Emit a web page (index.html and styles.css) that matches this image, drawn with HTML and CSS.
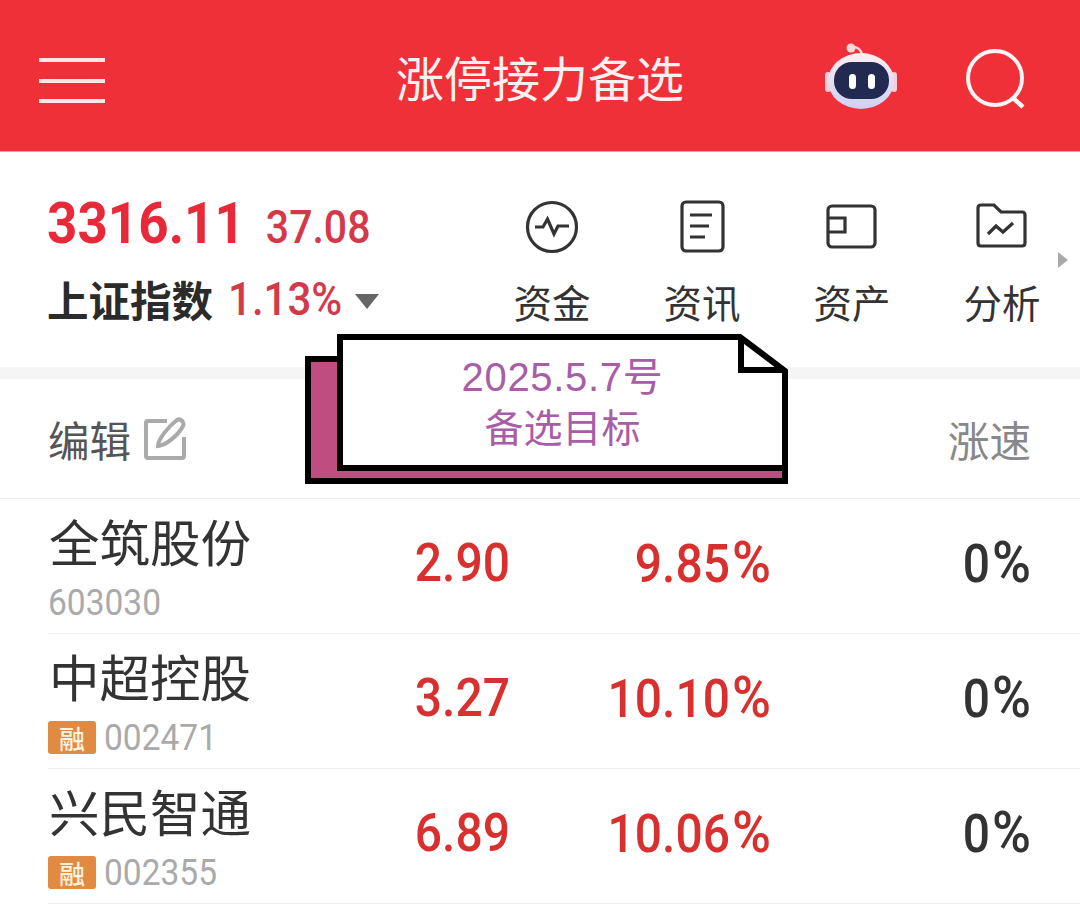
FILE: index.html
```html
<!DOCTYPE html>
<html lang="zh-CN">
<head>
  <meta charset="UTF-8">
  <title>涨停接力备选</title>
  <link rel="stylesheet" href="styles.css">
</head>
<body>

  <header class="topbar">
    <svg class="menu-icon" width="66" height="46" viewBox="0 0 66 46">
      <path d="M0 2H66M0 23H66M0 43H66" stroke="#fff" stroke-opacity=".88" stroke-width="4" fill="none"/>
    </svg>
    <h1 class="title">涨停接力备选</h1>
    <svg class="robot-icon" width="72" height="68" viewBox="0 0 72 68">
      <defs>
        <linearGradient id="shell" x1="0" y1="0" x2="0" y2="1">
          <stop offset="0" stop-color="#fdeef2"/>
          <stop offset="1" stop-color="#cfd0f4"/>
        </linearGradient>
      </defs>
      <path d="M27 4C33 4 36 6 37 12" stroke="#f8d5da" stroke-width="2.5" fill="none"/>
      <circle cx="26" cy="5" r="4.500" fill="#f9d8dc"/>
      <rect x="0" y="29" width="6" height="20" rx="3" fill="#f6cfd6"/>
      <rect x="66" y="29" width="6" height="20" rx="3" fill="#f6cfd6"/>
      <ellipse cx="36" cy="38" rx="33" ry="28" fill="url(#shell)"/>
      <rect x="9" y="19" width="55" height="37" rx="18" fill="#232a52"/>
      <rect x="24" y="31" width="7" height="15" rx="3.500" fill="#fff"/>
      <rect x="43" y="31" width="7" height="15" rx="3.500" fill="#fff"/>
    </svg>
    <svg class="search-icon" width="62" height="60" viewBox="0 0 62 60">
      <circle cx="30" cy="29" r="27" stroke="#fff" stroke-opacity=".95" stroke-width="4" fill="none"/>
      <path d="M48 49L58 58" stroke="#fff" stroke-opacity=".95" stroke-width="4.500" fill="none"/>
    </svg>
  </header>

  <section class="summary">
    <div class="index-box">
      <div class="index-top">
        <span class="index-value">3316.11</span>
        <span class="index-change">37.08</span>
      </div>
      <div class="index-bottom">
        <span class="index-name">上证指数</span>
        <span class="index-pct">1.13%</span>
        <span class="caret"></span>
      </div>
    </div>
    <nav class="shortcuts">
      <div class="shortcut">
        <svg width="54" height="54" viewBox="0 0 54 54" class="line-icon">
          <circle cx="27" cy="27" r="24.500"/>
          <path d="M10 27H18L22.500 19L29 34L33 26H44"/>
        </svg>
        <span>资金</span>
      </div>
      <div class="shortcut">
        <svg width="54" height="54" viewBox="0 0 54 54" class="line-icon">
          <rect x="7" y="2" width="41" height="49" rx="4"/>
          <path d="M15 15H37M15 26H34M15 37H30"/>
        </svg>
        <span>资讯</span>
      </div>
      <div class="shortcut">
        <svg width="54" height="54" viewBox="0 0 54 54" class="line-icon">
          <rect x="3" y="6" width="47" height="41" rx="4"/>
          <path d="M3 18H20V32H3"/>
        </svg>
        <span>资产</span>
      </div>
      <div class="shortcut">
        <svg width="54" height="54" viewBox="0 0 54 54" class="line-icon">
          <path d="M3 8Q3 5 6 5H19L26 12H47Q50 12 50 15V43Q50 46 47 46H6Q3 46 3 43Z"/>
          <path d="M13 34L21 26L28 32L38 23"/>
        </svg>
        <span>分析</span>
      </div>
      <span class="more-arrow"></span>
    </nav>
  </section>

  <div class="band"></div>

  <div class="list-head">
    <div class="edit">
      <span>编辑</span>
      <svg width="44" height="44" viewBox="0 0 44 44" class="edit-icon">
        <path d="M24 4H5Q3 4 3 6V39Q3 41 5 41H39Q41 41 41 39V20"/>
        <path d="M15 29C15 22 26 9 34 3C37 1 42 5 40 9C36 17 24 28 15 29Z"/>
      </svg>
    </div>
    <span class="speed-head">涨速</span>
  </div>

  <div class="stock-row">
    <div class="stock-info">
      <div class="stock-name">全筑股份</div>
      <div class="stock-code"><span>603030</span></div>
    </div>
    <div class="num">2.90</div>
    <div class="num">9.85<i>%</i></div>
    <div class="num speed">0<i>%</i></div>
  </div>
  <div class="stock-row">
    <div class="stock-info">
      <div class="stock-name">中超控股</div>
      <div class="stock-code"><em class="badge">融</em><span>002471</span></div>
    </div>
    <div class="num">3.27</div>
    <div class="num">10.10<i>%</i></div>
    <div class="num speed">0<i>%</i></div>
  </div>
  <div class="stock-row">
    <div class="stock-info">
      <div class="stock-name">兴民智通</div>
      <div class="stock-code"><em class="badge">融</em><span>002355</span></div>
    </div>
    <div class="num">6.89</div>
    <div class="num">10.06<i>%</i></div>
    <div class="num speed">0<i>%</i></div>
  </div>

  <!-- sticker pasted over the page -->
  <div class="note">
    <svg class="note-shape" width="484" height="150" viewBox="0 0 484 150">
      <path d="M36 25H4V147H481V130H36Z" fill="#c04d80" stroke="#000" stroke-width="6"/>
      <path d="M36 3H436L481 37V134H36Z" fill="#fff" stroke="#000" stroke-width="6"/>
      <path d="M437 3V36H481" fill="none" stroke="#000" stroke-width="6"/>
    </svg>
    <div class="note-text">
      <div class="note-date">2025.5.7号</div>
      <div>备选目标</div>
    </div>
  </div>

</body>
</html>
```

FILE: styles.css
```css
* {
  box-sizing: border-box;
}

body {
  margin: 0;
  height: 922px;
  overflow: hidden;
  position: relative;
  background-color: #fff;
  font-family: Roboto, "Noto Sans CJK SC", sans-serif;
  color: #333;
}

.topbar {
  height: 152px;
  background-color: #f03038;
  border-bottom: 1px solid #f6a0a4;
  display: flex;
  align-items: center;
  padding: 0 53px 0 39px;
  position: relative;
}

.menu-icon {
  margin-top: 11px;
}

.title {
  position: absolute;
  left: 0;
  right: 0;
  top: 46px;
  margin: 0;
  text-align: center;
  font-family: "Noto Sans CJK SC", sans-serif;
  font-size: 48px;
  line-height: 60px;
  font-weight: 400;
  color: #fdf0f0;
}

.robot-icon {
  margin-left: auto;
  margin-top: 2px;
}

.search-icon {
  margin-left: 68px;
  margin-top: 6px;
}

.summary {
  height: 215px;
  display: flex;
  padding-left: 47px;
}

.index-box {
  flex: none;
  width: 430px;
}

.index-top {
  display: flex;
  align-items: baseline;
  gap: 21px;
  height: 96px;
  padding-top: 36px;
}

.index-value {
  font-size: 53px;
  line-height: 70px;
  font-weight: 700;
  color: #e8293a;
  transform: scaleY(1.1);
}

.index-change {
  font-size: 41px;
  line-height: 60px;
  font-weight: 500;
  color: #d4394a;
  transform: scaleY(1.13);
}

.index-bottom {
  display: flex;
  align-items: center;
  height: 60px;
  margin-top: 21px;
}

.index-name {
  font-family: "Noto Sans CJK SC", sans-serif;
  font-size: 41.500px;
  font-weight: 700;
  color: #2b2b2b;
}

.index-pct {
  margin-left: 15px;
  font-size: 42px;
  font-weight: 500;
  color: #d4394a;
  transform: scaleY(1.08);
}

.caret {
  margin-left: 13px;
  margin-top: 4px;
  border-style: solid;
  border-width: 15px 12px 0;
  border-color: #666 transparent transparent;
}

.shortcuts {
  flex: none;
  display: flex;
  padding-top: 48px;
  position: relative;
}

.shortcut {
  width: 150px;
  display: flex;
  flex-direction: column;
  align-items: center;
  font-family: "Noto Sans CJK SC", sans-serif;
  font-size: 38.500px;
  line-height: 50px;
  color: #333;
}

.shortcut span {
  margin-top: 22px;
}

.line-icon {
  fill: none;
  stroke: #333;
  stroke-width: 3.2;
}

.more-arrow {
  position: absolute;
  left: 581px;
  top: 100px;
  border-style: solid;
  border-width: 8px 0 8px 10px;
  border-color: transparent transparent transparent #aaa;
}

.band {
  height: 12px;
  background-color: #f5f5f5;
}

.list-head {
  height: 120px;
  padding: 0 49px 0 48px;
  display: flex;
  align-items: center;
  justify-content: space-between;
  border-bottom: 1px solid #eee;
  font-family: "Noto Sans CJK SC", sans-serif;
  font-size: 41.500px;
  line-height: 56px;
}

.edit {
  display: flex;
  align-items: center;
  gap: 12px;
  color: #555;
}

.edit-icon {
  fill: none;
  stroke: #aaa;
  stroke-width: 4;
}

.speed-head {
  color: #888;
}

.stock-row {
  height: 135px;
  margin-left: 48px;
  padding-right: 49px;
  display: grid;
  grid-template-columns: 300px 162px 261px 260px;
  align-items: center;
  border-bottom: 1px solid #eee;
}

.stock-info {
  align-self: start;
  padding-top: 11px;
}

.stock-name {
  font-family: "Noto Sans CJK SC", sans-serif;
  font-size: 50.500px;
  line-height: 60px;
  color: #333;
  padding-left: 1px;
}

.stock-code {
  display: flex;
  align-items: center;
  gap: 8px;
  height: 40px;
  margin-top: 12px;
  font-size: 33.500px;
  color: #aaa;
}

.stock-code span {
  transform: scaleY(1.1);
}

.badge {
  width: 48px;
  height: 33px;
  border-radius: 3px;
  background-color: #e08a42;
  color: #fff3e0;
  font-family: "Noto Sans CJK SC", sans-serif;
  font-style: normal;
  font-size: 26px;
  font-weight: 500;
  line-height: 33px;
  text-align: center;
}

.num {
  padding-bottom: 6px;
  text-align: right;
  font-size: 48px;
  font-weight: 500;
  color: #d8302f;
  transform: scaleY(1.1);
}

.num i {
  font-style: normal;
  font-size: 53px;
  margin-left: 2px;
}

.speed {
  color: #333;
}

.note {
  position: absolute;
  left: 304px;
  top: 334px;
  width: 484px;
  height: 150px;
}

.note-shape {
  position: absolute;
  left: 0;
  top: 0;
}

.note-text {
  position: relative;
  margin-left: 33px;
  padding-top: 18px;
  text-align: center;
  font-family: "Liberation Sans", "Noto Sans CJK SC", sans-serif;
  font-size: 39px;
  line-height: 51px;
  color: #a85ea6;
}

.note-date {
  font-size: 40px;
  letter-spacing: 0.7px;
}
```
